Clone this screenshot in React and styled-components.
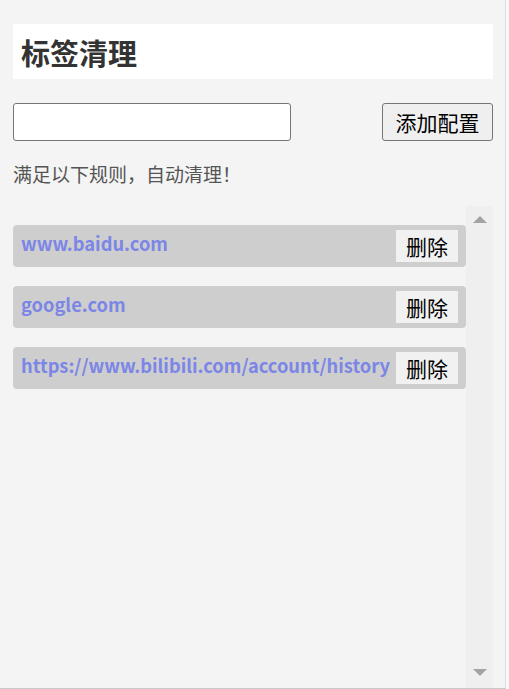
import React, { useState } from "react";
import styled, { createGlobalStyle } from "styled-components";

const rules = [
  "www.baidu.com",
  "google.com",
  "https://www.bilibili.com/account/history",
];

function App() {
  const [value, setValue] = useState("");
  const [list, setList] = useState(rules);

  const add = () => {
    if (!value.trim()) return;
    setList([...list, value.trim()]);
    setValue("");
  };

  return (
    <Page>
      <GlobalStyle />
      <Header>
        <h2>标签清理</h2>
      </Header>
      <AddRow>
        <Input value={value} onChange={(e) => setValue(e.target.value)} />
        <AddButton onClick={add}>添加配置</AddButton>
      </AddRow>
      <Tip>满足以下规则，自动清理！</Tip>
      <ListArea>
        <List>
          {list.map((item) => (
            <Item key={item}>
              <Url>{item}</Url>
              <DelButton onClick={() => setList(list.filter((i) => i !== item))}>
                删除
              </DelButton>
            </Item>
          ))}
        </List>
        <ScrollTrack>
          <Arrow />
          <Arrow $down />
        </ScrollTrack>
      </ListArea>
    </Page>
  );
}

const GlobalStyle = createGlobalStyle`
  body {
    margin: 0;
    background: #f8f8f8;
    font-family: "Noto Sans CJK SC", "Noto Sans", sans-serif;
  }
`;

const Page = styled.div`
  box-sizing: border-box;
  width: 506px;
  height: 689px;
  padding: 24px 12px 0 13px;
  background: #f4f4f4;
  border-right: 1px solid #dcdcdc;
  border-bottom: 1px solid #c8c8c8;
  display: flex;
  flex-direction: column;
`;

const Header = styled.div`
  background: #ffffff;
  height: 55px;
  display: flex;
  align-items: center;
  padding-left: 8px;
  h2 {
    margin: 0;
    font-size: 29px;
    font-weight: 700;
    color: #333333;
  }
`;

const AddRow = styled.div`
  margin-top: 24px;
  display: flex;
  justify-content: space-between;
`;

const Input = styled.input`
  box-sizing: border-box;
  width: 278px;
  height: 38px;
  border: 1px solid #767676;
  border-radius: 3px;
  background: #ffffff;
  font-size: 18px;
  padding: 0 6px;
  outline: none;
`;

const AddButton = styled.button`
  box-sizing: border-box;
  width: 111px;
  height: 38px;
  border: 1px solid #767676;
  border-radius: 3px;
  background: #efefef;
  color: #000000;
  font-family: inherit;
  font-size: 21px;
  padding: 0;
  cursor: pointer;
`;

const Tip = styled.div`
  margin-top: 20px;
  font-size: 19px;
  line-height: 25px;
  color: #555555;
`;

const ListArea = styled.div`
  margin-top: 20px;
  flex: 1;
  display: flex;
  min-height: 0;
`;

const List = styled.div`
  flex: 1;
  padding-top: 19px;
  display: flex;
  flex-direction: column;
  gap: 19px;
`;

const Item = styled.div`
  height: 42px;
  background: #cecece;
  border-radius: 4px;
  display: flex;
  align-items: center;
  justify-content: space-between;
  padding: 0 8px 0 8px;
`;

const Url = styled.span`
  font-size: 18.3px;
  font-weight: 700;
  color: #7b86e6;
  margin-top: -6px;
  white-space: nowrap;
`;

const DelButton = styled.button`
  width: 62px;
  height: 32px;
  border: none;
  border-radius: 0;
  background: #f1f1f1;
  color: #000000;
  font-family: inherit;
  font-size: 21px;
  padding: 0;
  cursor: pointer;
`;

const ScrollTrack = styled.div`
  width: 27px;
  background: #efefef;
  display: flex;
  flex-direction: column;
  justify-content: space-between;
  align-items: center;
  padding: 10px 0 12px;
`;

const Arrow = styled.div`
  width: 0;
  height: 0;
  border-left: 7px solid transparent;
  border-right: 7px solid transparent;
  ${(p) =>
    p.$down
      ? "border-top: 7px solid #a3a3a3;"
      : "border-bottom: 7px solid #a3a3a3;"}
`;

export default App;
